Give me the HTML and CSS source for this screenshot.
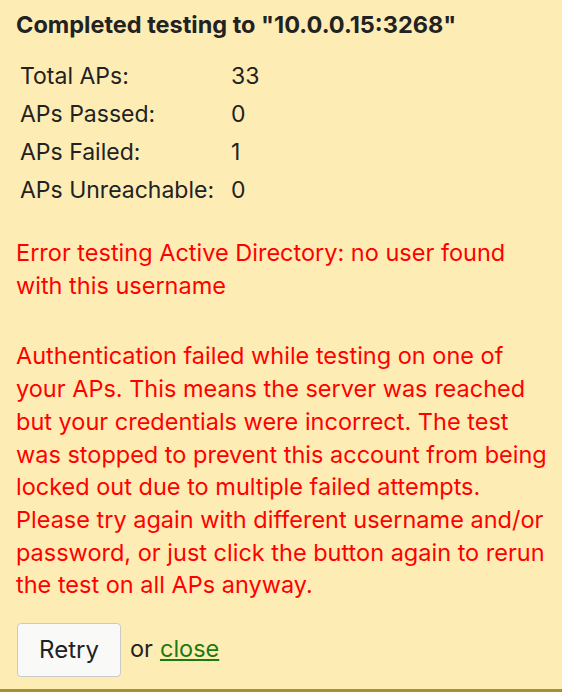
FILE: index.html
```html
<!DOCTYPE html>
<html>
<head>
<meta charset="utf-8">
<link rel="stylesheet" href="styles.css">
</head>
<body>
<div class="panel">
  <h1 class="title">Completed testing to "10.0.0.15:3268"</h1>
  <table class="stats">
    <tr><td class="label">Total APs:</td><td>33</td></tr>
    <tr><td class="label">APs Passed:</td><td>0</td></tr>
    <tr><td class="label">APs Failed:</td><td>1</td></tr>
    <tr><td class="label">APs Unreachable:</td><td>0</td></tr>
  </table>
  <p class="error first">Error testing Active Directory: no user found with this username</p>
  <p class="error second">Authentication failed while testing on one of your APs. This means the server was reached but your credentials were incorrect. The test was stopped to prevent this account from being locked out due to multiple failed attempts. Please try again with different username and/or password, or just click the button again to rerun the test on all APs anyway.</p>
  <div class="actions">
    <button class="retry">Retry</button>
    <span class="or">or</span>
    <a class="close" href="#">close</a>
  </div>
</div>
</body>
</html>
```
FILE: styles.css
```css
html, body {
  margin: 0;
  padding: 0;
  background: #fdedb5;
}
body {
  font-family: Inter, "Liberation Sans", Arial, sans-serif;
  color: #222;
}
.panel {
  box-sizing: border-box;
  width: 562px;
  height: 692px;
  padding: 11px 11px 0 16px;
  border-bottom: 3px solid #a58f2f;
  background: #fdedb5;
}
.title {
  margin: 0;
  font-size: 23.5px;
  font-weight: 700;
  line-height: 28px;
  color: #222;
}
.stats {
  margin-top: 18px;
  border-collapse: collapse;
  font-size: 23px;
}
.stats td {
  padding: 0 0 0 4px;
  height: 38px;
  vertical-align: middle;
}
.stats td.label {
  width: 207px;
}
.error {
  color: #f00;
  font-size: 23.5px;
  line-height: 32.7px;
  margin: 0;
}
.error.first {
  margin-top: 28px;
}
.error.second {
  margin-top: 38px;
}
.actions {
  display: flex;
  align-items: center;
  margin-top: 21px;
  font-size: 23.5px;
}
.retry {
  box-sizing: border-box;
  width: 104px;
  height: 54px;
  margin-left: 1px;
  background: #f9f9f8;
  border: 1px solid #c9c9c9;
  border-radius: 4px;
  font-family: Inter, "Liberation Sans", Arial, sans-serif;
  font-size: 24px;
  color: #222;
  padding: 0 0 2px 0;
}
.or {
  margin-left: 9px;
  margin-bottom: 3px;
  color: #222;
}
.close {
  margin-left: 7px;
  margin-bottom: 3px;
  color: #1d7a10;
  text-decoration: underline;
}
```
